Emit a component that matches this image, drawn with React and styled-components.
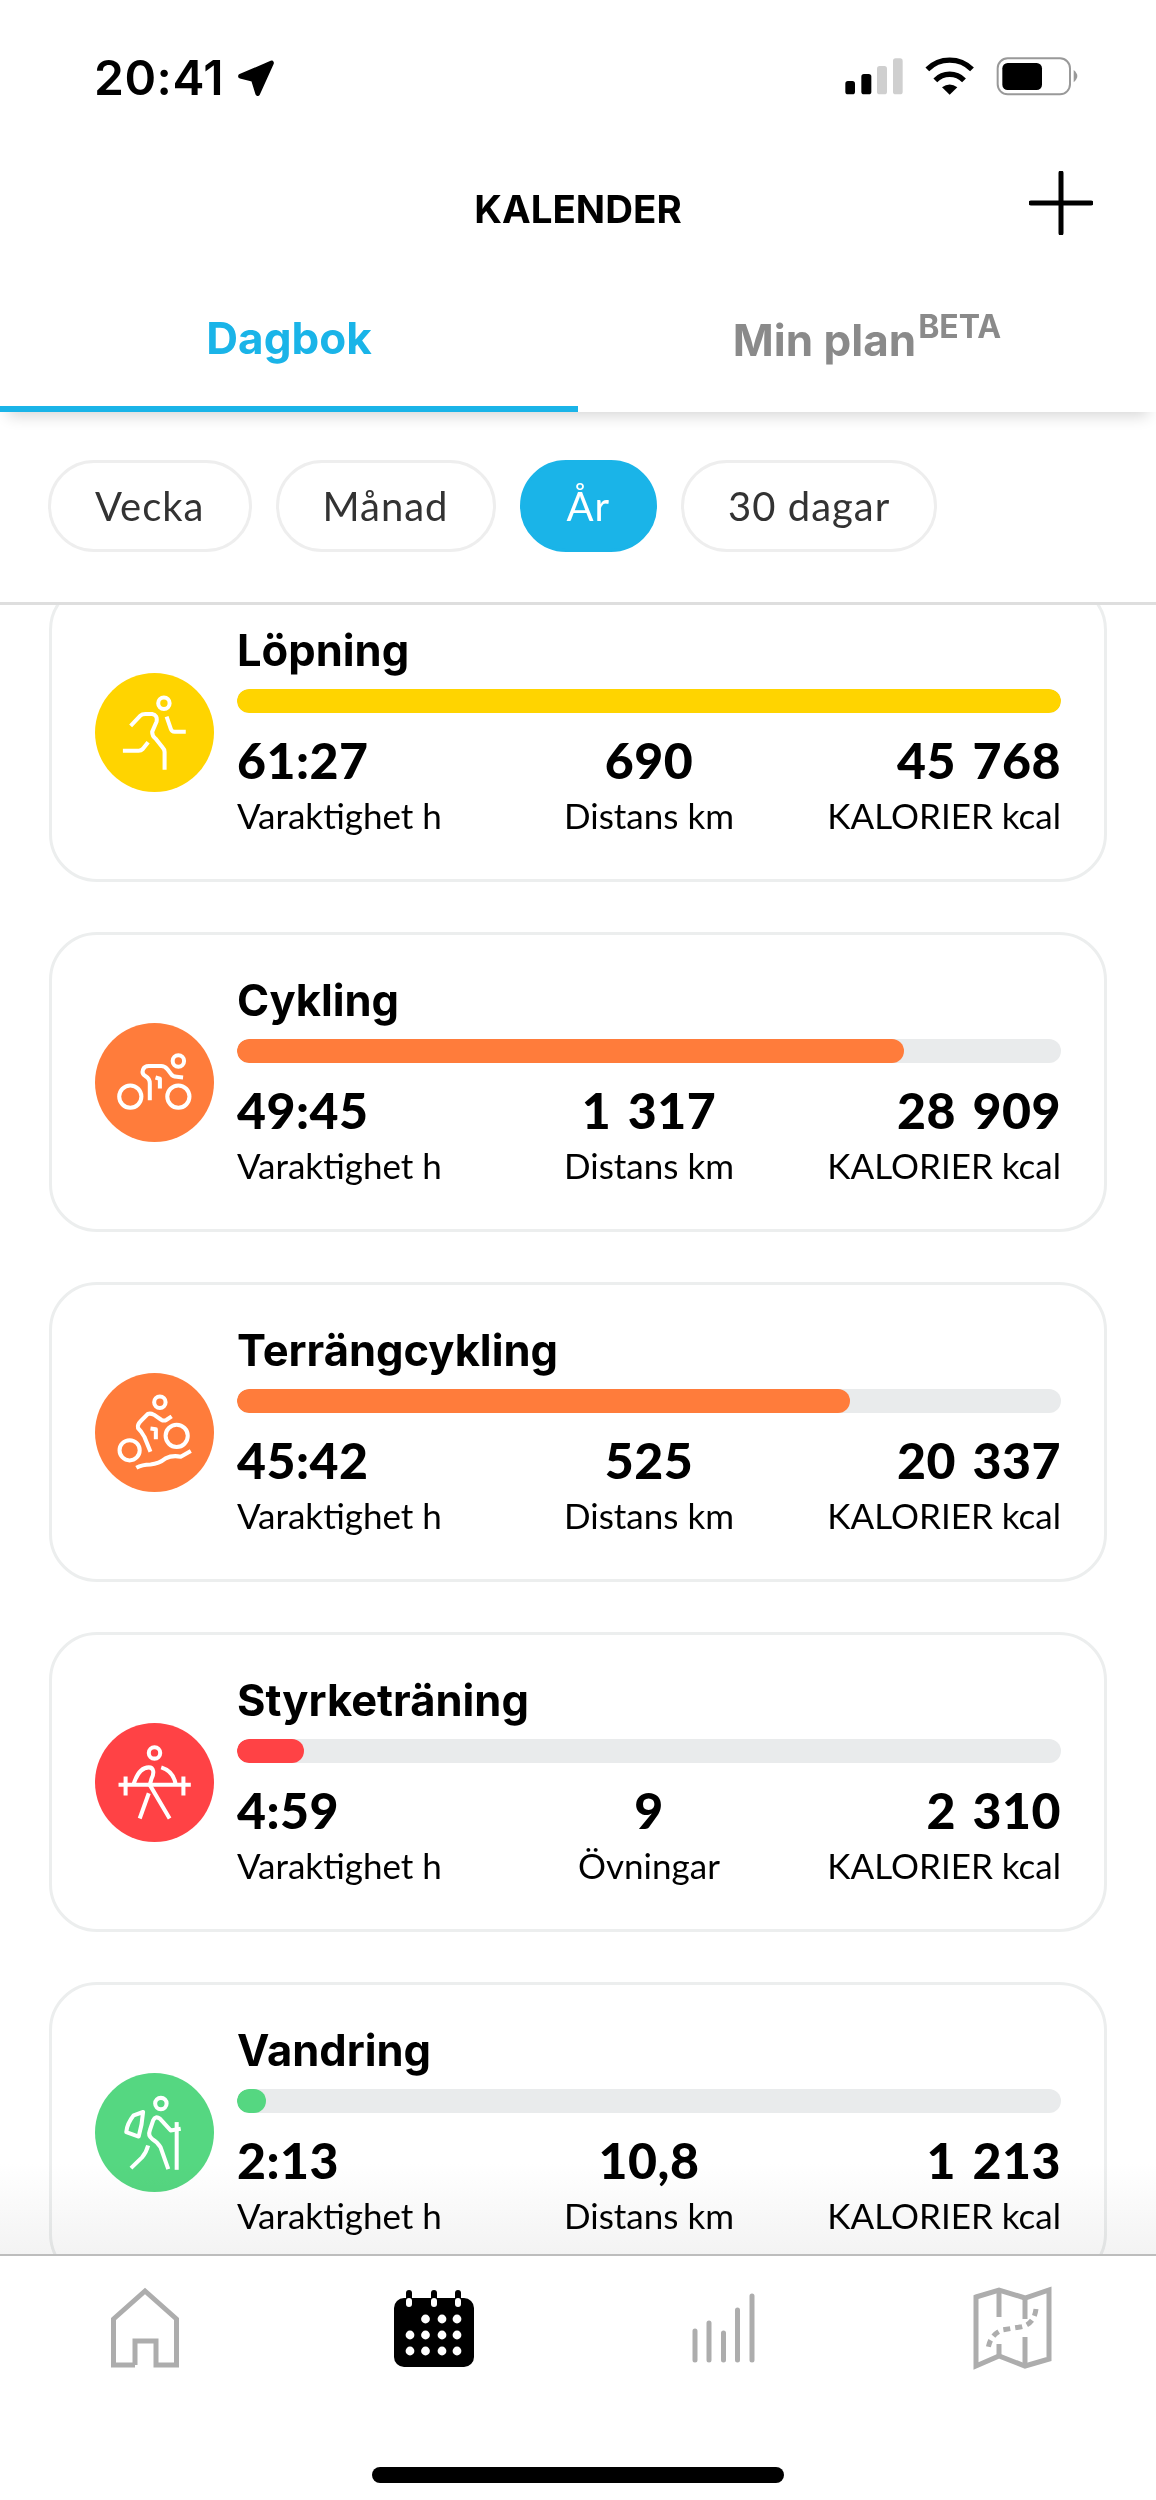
import styled, { createGlobalStyle } from "styled-components"

const GlobalStyle = createGlobalStyle`
    html, body {
        margin:0;
        padding:0;
        background:#fff;
    }
    * {
        box-sizing:border-box;
    }
`

const Screen = styled.div`
    width:1156px;
    height:2500px;
    display:flex;
    flex-direction:column;
    overflow:hidden;
    background:#fff;
    color:#000;
    font-family:"Lato","Liberation Sans",sans-serif;
`

const StatusBar = styled.div`
    height:150px;
    flex:none;
    display:flex;
    justify-content:space-between;
    align-items:flex-start;
    padding:50px 0 0 94px;
`

const TimeGroup = styled.div`
    display:flex;
    align-items:center;
    gap:12px;
`

const Time = styled.span`
    font-family:"Inter",sans-serif;
    font-size:48px;
    font-weight:600;
    line-height:56px;
    letter-spacing:0.5px;
`

const StatusIcons = styled.svg`
    width:237px;
    height:43px;
    margin:5px 76px 0 0;
`

const Header = styled.div`
    height:120px;
    flex:none;
    display:grid;
    grid-template-columns:1fr auto 1fr;
    align-items:center;
`

const HeaderTitle = styled.h1`
    grid-column:2;
    margin:0;
    font-family:"Inter",sans-serif;
    font-size:38.5px;
    font-weight:700;
    line-height:44px;
    position:relative;
    top:-1px;
`

const PlusIcon = styled.svg`
    justify-self:end;
    width:64px;
    height:64px;
    margin:-14px 63px 0 0;
`

const Tabs = styled.div`
    height:142px;
    flex:none;
    display:grid;
    grid-template-columns:1fr 1fr;
    box-shadow:0 12px 14px -8px rgba(0,0,0,0.16);
    position:relative;
`

const Tab = styled.div`
    display:flex;
    justify-content:center;
    align-items:flex-start;
    padding-top:${(p) => (p.$active ? "42px" : "44px")};
    font-family:"Inter",sans-serif;
    font-size:44px;
    font-weight:700;
    line-height:52px;
    color:${(p) => (p.$active ? "#1ab4e8" : "#8a8a8a")};
    border-bottom:6px solid ${(p) => (p.$active ? "#1ab4e8" : "transparent")};
`

const Beta = styled.sup`
    font-size:32px;
    line-height:32px;
    margin-top:-3px;
    margin-left:2px;
    vertical-align:baseline;
`

const Filters = styled.div`
    height:193px;
    flex:none;
    display:flex;
    gap:24px;
    padding:48px 0 0 48px;
    border-bottom:3px solid #dedede;
`

const Pill = styled.div`
    height:92px;
    padding:0 44px;
    display:flex;
    align-items:center;
    border-radius:46px;
    font-size:40px;
    letter-spacing:1px;
    color:${(p) => (p.$active ? "#fff" : "#333")};
    background:${(p) => (p.$active ? "#1ab4e8" : "#fff")};
    border:3px solid ${(p) => (p.$active ? "#1ab4e8" : "#eeeeee")};
`

const List = styled.div`
    flex:1;
    min-height:0;
    overflow:hidden;
    position:relative;
    display:flex;
    flex-direction:column;
    gap:50px;
    padding:0 49px;
`

const Fade = styled.div`
    position:absolute;
    left:0;
    right:0;
    bottom:0;
    height:90px;
    mix-blend-mode:multiply;
    background:linear-gradient(#ffffff, #f3f3f3);
`

const Card = styled.div`
    height:300px;
    flex:none;
    display:flex;
    align-items:center;
    gap:23px;
    padding:0 43px 0 43px;
    border:3px solid #eceeee;
    border-radius:48px;
    background:#fff;
    &:first-child {
        margin-top:-23px;
    }
`

const IconCircle = styled.div`
    width:119px;
    height:119px;
    flex:none;
    border-radius:50%;
    background:${(p) => p.$color};
    svg {
        display:block;
        width:100%;
        height:100%;
        fill:none;
        stroke:#fff;
        stroke-width:12;
        stroke-linecap:butt;
        stroke-linejoin:round;
    }
`

const CardBody = styled.div`
    flex:1;
    min-width:0;
`

const CardTitle = styled.div`
    font-family:"Inter",sans-serif;
    font-size:43.5px;
    font-weight:700;
    line-height:50px;
    margin-bottom:9px;
    position:relative;
    top:-5px;
`

const Track = styled.div`
    height:24px;
    border-radius:12px;
    background:#e9ebec;
    overflow:hidden;
`

const Fill = styled.div`
    height:100%;
    border-radius:12px;
    background:${(p) => p.$color};
`

const Stats = styled.div`
    display:grid;
    grid-template-columns:1fr 1fr 1fr;
    margin-top:19px;
`

const Stat = styled.div`
    text-align:${(p) => p.$align};
`

const StatValue = styled.div`
    font-size:50px;
    font-weight:900;
    line-height:56px;
    letter-spacing:0.5px;
    word-spacing:4px;
`

const StatLabel = styled.div`
    font-size:35px;
    line-height:40px;
    margin-top:7px;
    white-space:nowrap;
`

const BottomNav = styled.div`
    height:246px;
    flex:none;
    display:flex;
    flex-direction:column;
    border-top:2px solid #bdbdbd;
    background:#fff;
`

const NavIcons = styled.div`
    display:grid;
    grid-template-columns:repeat(4, 289px);
    padding-top:30px;
`

const NavItem = styled.div`
    height:84px;
    display:flex;
    justify-content:center;
    align-items:center;
`

const NavIcon = styled.svg`
    display:block;
    height:84px;
    width:${(p) => p.$width}px;
`

const HomeIndicator = styled.div`
    width:412px;
    height:16px;
    border-radius:8px;
    background:#000;
    margin:97px auto 0;
`

const RunIcon = () => (
    <svg viewBox="75 70 354 354">
        <circle cx="280" cy="160" r="17" />
        <path d="M181 227 L210 197 Q215 192 225 192 L245 192 Q262 195 258 215 L245 245 Q245 258 255 265 L275 290 Q282 297 282 305 L282 358" />
        <path d="M288 200 L300 235 Q303 245 312 245 L345 245" />
        <path d="M158 301 L205 301 Q212 301 217 296 L233 276" />
    </svg>
)

const BikeIcon = () => (
    <svg viewBox="75 70 354 354">
        <circle cx="323" cy="183" r="17" />
        <circle cx="180" cy="289" r="33" />
        <circle cx="323" cy="289" r="33" />
        <path d="M238 300 L238 250 Q238 235 225 228 Q213 222 218 208 Q222 198 235 198 L272 198 Q282 198 290 207 L300 220 Q306 230 318 230 L337 232" />
        <path d="M255 232 L268 236 L268 265" />
    </svg>
)

const MtbIcon = () => (
    <svg viewBox="75 68 354 354">
        <circle cx="268" cy="155" r="17" />
        <circle cx="178" cy="298" r="30" />
        <circle cx="318" cy="255" r="33" />
        <path d="M240 302 L222 258 Q212 240 203 232 Q200 222 212 210 L232 190 Q240 187 250 192 L272 207 Q280 212 288 207 L303 197" />
        <path d="M240 233 L256 235 L256 265" />
        <path d="M198 350 Q215 340 240 340 Q265 338 285 322 Q305 312 330 317 L360 300" />
    </svg>
)

const StrengthIcon = () => (
    <svg viewBox="75 66 354 354">
        <circle cx="252" cy="155" r="17" />
        <path d="M145 250 H360" />
        <path d="M166 225 V282 M338 225 V282" />
        <path d="M190 248 C200 215 215 198 235 198 C250 198 252 215 243 232 L238 250 L297 350" />
        <path d="M272 198 Q310 210 315 250" />
        <path d="M235 275 L208 350" />
    </svg>
)

const HikeIcon = () => (
    <svg viewBox="75 64 354 354">
        <circle cx="271" cy="155" r="17" />
        <path d="M190 190 L218 180 Q215 220 205 253 L168 240 Q170 215 190 190 Z" />
        <path d="M293 350 L270 285 Q262 270 245 260 Q232 250 238 235 L248 205 Q255 190 268 200 L300 235 L330 230" />
        <path d="M318 210 L318 352" />
        <path d="M182 347 L215 315 Q228 300 233 280" />
    </svg>
)

const activities = [
    { name: "Löpning", color: "#ffd400", pct: 100, Icon: RunIcon, time: "61:27", mid: "690", midLabel: "Distans km", kcal: "45 768" },
    { name: "Cykling", color: "#ff7c3b", pct: 81, Icon: BikeIcon, time: "49:45", mid: "1 317", midLabel: "Distans km", kcal: "28 909" },
    { name: "Terrängcykling", color: "#ff7c3b", pct: 74.4, Icon: MtbIcon, time: "45:42", mid: "525", midLabel: "Distans km", kcal: "20 337" },
    { name: "Styrketräning", color: "#ff4245", pct: 8.1, Icon: StrengthIcon, time: "4:59", mid: "9", midLabel: "Övningar", kcal: "2 310" },
    { name: "Vandring", color: "#55d781", pct: 3.5, Icon: HikeIcon, time: "2:13", mid: "10,8", midLabel: "Distans km", kcal: "1 213" },
]

const ranges = ["Vecka", "Månad", "År", "30 dagar"]

const calendarDots = [
    [425.5, 2319], [442, 2319], [457, 2319],
    [410, 2335], [425.5, 2335], [442, 2335], [457, 2335],
    [410, 2351], [425.5, 2351], [442, 2351], [457, 2351],
]

const App = () => {
    return (
        <Screen>
            <GlobalStyle />
            <StatusBar>
                <TimeGroup>
                    <Time>20:41</Time>
                    <svg width="40" height="39" viewBox="505 83 120 118">
                        <path d="M518 135 L612 95 L570 188 L557 145 Z" fill="#000" stroke="#000" strokeWidth="14" strokeLinejoin="round" />
                    </svg>
                </TimeGroup>
                <StatusIcons viewBox="190 75 711 129">
                    <rect x="197" y="153" width="29" height="40" rx="8" fill="#000" />
                    <rect x="245" y="132" width="30" height="61" rx="8" fill="#000" />
                    <rect x="292" y="108" width="30" height="85" rx="8" fill="#cfcfcf" />
                    <rect x="340" y="85" width="29" height="108" rx="8" fill="#cfcfcf" />
                    <path d="M443 118 A95 95 0 0 1 577 118" fill="none" stroke="#000" strokeWidth="16" />
                    <path d="M467 151 A60 60 0 0 1 553 151" fill="none" stroke="#000" strokeWidth="16" />
                    <path d="M487 172 Q510 155 533 172 L510 194 Z" fill="#000" />
                    <rect x="654" y="85" width="217" height="108" rx="30" fill="none" stroke="#999" strokeWidth="6" />
                    <rect x="668" y="99" width="119" height="81" rx="16" fill="#000" />
                    <path d="M882 120 Q893 130 893 138 Q893 147 882 157 Z" fill="#999" />
                </StatusIcons>
            </StatusBar>
            <Header>
                <HeaderTitle>KALENDER</HeaderTitle>
                <PlusIcon viewBox="0 0 64 64">
                    <path d="M32 2 V62 M2 32 H62" stroke="#000" strokeWidth="5" strokeLinecap="round" />
                </PlusIcon>
            </Header>
            <Tabs>
                <Tab $active>Dagbok</Tab>
                <Tab>
                    Min plan<Beta>BETA</Beta>
                </Tab>
            </Tabs>
            <Filters>
                {ranges.map((r) => (
                    <Pill key={r} $active={r === "År"}>{r}</Pill>
                ))}
            </Filters>
            <List>
                {activities.map((a) => (
                    <Card key={a.name}>
                        <IconCircle $color={a.color}>
                            <a.Icon />
                        </IconCircle>
                        <CardBody>
                            <CardTitle>{a.name}</CardTitle>
                            <Track>
                                <Fill $color={a.color} style={{ width: `${a.pct}%` }} />
                            </Track>
                            <Stats>
                                <Stat $align="left">
                                    <StatValue>{a.time}</StatValue>
                                    <StatLabel>Varaktighet h</StatLabel>
                                </Stat>
                                <Stat $align="center">
                                    <StatValue>{a.mid}</StatValue>
                                    <StatLabel>{a.midLabel}</StatLabel>
                                </Stat>
                                <Stat $align="right">
                                    <StatValue>{a.kcal}</StatValue>
                                    <StatLabel>KALORIER kcal</StatLabel>
                                </Stat>
                            </Stats>
                        </CardBody>
                    </Card>
                ))}
                <Fade />
            </List>
            <BottomNav>
                <NavIcons>
                    <NavItem>
                        <NavIcon $width={70} viewBox="110 2286 70 84" fill="none" stroke="#adadad" strokeWidth="5">
                            <path d="M135 2365 H113.5 V2319 L145 2291 L176.5 2319 V2365 H156 V2341 H135 V2365" />
                        </NavIcon>
                    </NavItem>
                    <NavItem>
                        <NavIcon $width={82} viewBox="393 2286 82 84">
                            <rect x="394" y="2298" width="80" height="69" rx="10" fill="#000" />
                            {[409, 434, 458].map((x) => (
                                <g key={x}>
                                    <rect x={x - 3} y="2290" width="6" height="17" rx="3" fill="#000" />
                                    <rect x={x - 3} y="2298" width="6" height="9" rx="3" fill="#fff" />
                                </g>
                            ))}
                            {calendarDots.map(([x, y]) => (
                                <circle key={`${x}-${y}`} cx={x} cy={y} r="4.4" fill="#fff" />
                            ))}
                        </NavIcon>
                    </NavItem>
                    <NavItem>
                        <NavIcon $width={70} viewBox="688 2287 70 84" fill="none" stroke="#adadad" strokeWidth="5" strokeLinecap="round">
                            <path d="M695 2361 V2332 M709 2361 V2324 M723.5 2361 V2334 M737.5 2361 V2311 M752 2361 V2297" />
                        </NavIcon>
                    </NavItem>
                    <NavItem>
                        <NavIcon $width={84} viewBox="970 2287 84 84" fill="none" stroke="#adadad" strokeWidth="5">
                            <path d="M976 2298 L999 2291 L1025 2299 L1049 2291 V2360 L1025 2367 L999 2357 L976 2367 Z" />
                            <path d="M999 2291 V2318 M999 2345 V2357 M1025 2299 V2320 M1025 2338 V2367" />
                            <path d="M1036 2310 Q1034 2326 1020 2328 L1002 2331 Q990 2336 988 2350" strokeDasharray="7 5" />
                        </NavIcon>
                    </NavItem>
                </NavIcons>
                <HomeIndicator />
            </BottomNav>
        </Screen>
    )
}

export default App
